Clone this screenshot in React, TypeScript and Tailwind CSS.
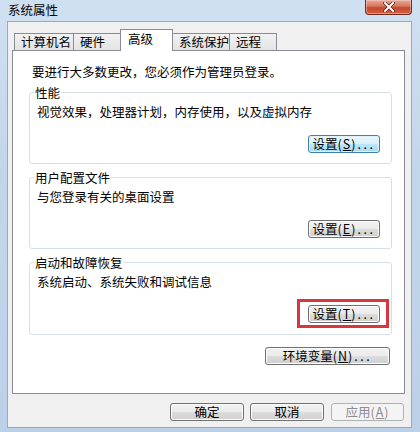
import type { ReactNode } from "react";

const font = { fontFamily: '"Noto Sans CJK SC", "Noto Sans", sans-serif' };

type BtnKind = "normal" | "focus" | "disabled";

function WinButton({
  children,
  width,
  kind = "normal",
  overlay,
}: {
  children: ReactNode;
  width: string;
  kind?: BtnKind;
  overlay?: boolean;
}) {
  const skin =
    kind === "focus"
      ? "border-[#3c7fb1] bg-[linear-gradient(to_bottom,#eaf6fd_0%,#d9f0fc_50%,#bee6fd_50%,#a7d9f5_100%)] shadow-[inset_0_0_0_1px_#dff2fc] text-black"
      : kind === "disabled"
        ? "border-[#adb2b5] bg-[#f4f4f4] text-[#8d8d8d]"
        : "border-[#707070] bg-[linear-gradient(to_bottom,#f2f2f2_0%,#ebebeb_50%,#dddddd_50%,#cfcfcf_100%)] shadow-[inset_0_0_0_1px_#fcfcfc] text-black";
  return (
    <div
      className={`relative flex h-[18px] items-center justify-center rounded-[3px] border text-[12.5px] leading-none ${skin} ${width}`}
    >
      <span className="whitespace-nowrap">{children}</span>
      {overlay && (
        <span className="pointer-events-none absolute -top-[7px] -bottom-[6px] -left-[12px] -right-[10px] border-[3px] border-[#d9363e]" />
      )}
    </div>
  );
}

// access key label like 设置(S)...
function Label({ text, k, dots = true }: { text: string; k: string; dots?: boolean }) {
  return (
    <>
      {text}
      <span className="tracking-[1px]">
        (<u>{k}</u>)
      </span>
      {dots && <span className="ml-[1px] tracking-[2.5px]">...</span>}
    </>
  );
}

function Group({
  title,
  text,
  children,
  height,
}: {
  title: string;
  text: string;
  children: ReactNode;
  height: string;
}) {
  return (
    <fieldset
      className={`ml-[16px] mr-[12px] rounded-[3px] border border-[#d5dfe5] p-0 ${height}`}
    >
      <legend className="ml-[4px] px-[1px] text-[12.5px] leading-[15px]">
        {title}
      </legend>
      <div className="flex flex-col pl-[7px] pr-[11px] pt-[4px]">
        <div className="text-[12.5px] leading-[15px]">{text}</div>
        <div className="mt-[16px] flex justify-end">{children}</div>
      </div>
    </fieldset>
  );
}

const tabs = [
  { label: "计算机名", w: "w-[60px]" },
  { label: "硬件", w: "w-[48px]" },
  { label: "高级", w: "w-[53px]", active: true },
  { label: "系统保护", w: "w-[58px]" },
  { label: "远程", w: "w-[48px]" },
];

export default function App() {
  return (
    <div
      style={font}
      className="flex h-[432px] w-[420px] flex-col overflow-hidden bg-[linear-gradient(to_bottom,#cfe0f1_0%,#c2d6eb_40%,#bcd1e8_100%)] text-black"
    >
      {/* title bar */}
      <div className="flex h-[21px] items-start justify-between">
        <div className="pl-[8px] pt-[2px] text-[12.5px] leading-[15px] text-black">
          系统属性
        </div>
        <div className="mr-[8px] flex h-[15px] w-[47px] items-center justify-center rounded-b-[4px] border border-t-0 border-[#6f2d22] bg-[linear-gradient(to_bottom,#e9a899_0%,#d6735c_45%,#c2482d_55%,#d4603f_100%)] shadow-[inset_0_0_0_1px_rgba(255,220,210,0.45)]">
          <svg width="12" height="10" viewBox="0 0 12 10">
            <path
              d="M2 1 L10 9 M10 1 L2 9"
              stroke="#5a2318"
              strokeWidth="3.4"
              strokeLinecap="square"
            />
            <path
              d="M2 1 L10 9 M10 1 L2 9"
              stroke="#ffffff"
              strokeWidth="2"
              strokeLinecap="square"
            />
          </svg>
        </div>
      </div>

      {/* client area */}
      <div className="ml-[7px] flex h-[407px] w-[405px] flex-col border border-[#9aaabb] bg-[#f0f0f0] pl-[4px] pr-[6px] pt-[7px]">
        {/* tabs */}
        <div className="flex h-[21px] items-end pl-[2px]">
          {tabs.map((t, i) =>
            t.active ? (
              <div
                key={t.label}
                className={`relative z-10 -mb-px ${i > 0 ? "-ml-px" : ""} h-[22px] ${t.w} border border-b-0 border-[#898c95] bg-white pl-[7px] pt-[1px] text-[12.5px] leading-[15px]`}
              >
                {t.label}
              </div>
            ) : (
              <div
                key={t.label}
                className={`${i > 0 ? "-ml-px" : ""} h-[17px] ${t.w} border border-b-0 border-[#898c95] bg-[linear-gradient(to_bottom,#f2f2f2,#e3e3e3)] pl-[6px] text-[12.5px] leading-[16px]`}
              >
                {t.label}
              </div>
            ),
          )}
        </div>

        {/* tab panel */}
        <div className="flex h-[344px] flex-col border border-[#898c95] bg-white pt-[13px]">
          <div className="pl-[19px] text-[12.5px] leading-[15px]">
            要进行大多数更改，您必须作为管理员登录。
          </div>

          <div className="mt-[6px]">
            <Group
              title="性能"
              text="视觉效果，处理器计划，内存使用，以及虚拟内存"
              height="h-[79px]"
            >
              <WinButton width="w-[72px]" kind="focus">
                <Label text="设置" k="S" />
              </WinButton>
            </Group>
          </div>

          <div className="mt-[6px]">
            <Group
              title="用户配置文件"
              text="与您登录有关的桌面设置"
              height="h-[79px]"
            >
              <WinButton width="w-[72px]">
                <Label text="设置" k="E" />
              </WinButton>
            </Group>
          </div>

          <div className="mt-[6px]">
            <Group
              title="启动和故障恢复"
              text="系统启动、系统失败和调试信息"
              height="h-[80px]"
            >
              <WinButton width="w-[72px]" overlay>
                <Label text="设置" k="T" />
              </WinButton>
            </Group>
          </div>

          <div className="mr-[14px] mt-[12px] flex justify-end">
            <WinButton width="w-[125px]">
              <Label text="环境变量" k="N" />
            </WinButton>
          </div>
        </div>

        {/* dialog buttons */}
        <div className="mr-px mt-[9px] flex justify-end gap-[6px]">
          <WinButton width="w-[74px]">确定</WinButton>
          <WinButton width="w-[74px]">取消</WinButton>
          <div className="ml-px">
            <WinButton width="w-[73px]" kind="disabled">
              <Label text="应用" k="A" dots={false} />
            </WinButton>
          </div>
        </div>
      </div>
    </div>
  );
}
